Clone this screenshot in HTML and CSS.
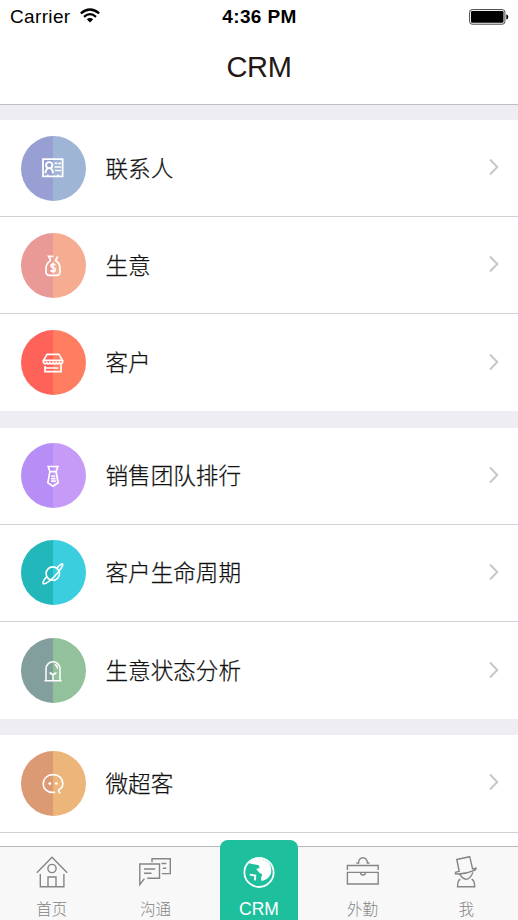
FILE: index.html
```html
<!DOCTYPE html>
<html lang="zh-CN">
<head>
<meta charset="utf-8">
<title>CRM</title>
<link rel="stylesheet" href="styles.css">
</head>
<body>
<div class="app">
  <header class="header">
    <div class="status">
      <div class="carrier"><span>Carrier</span>
        <svg class="wifi" width="20" height="15" viewBox="0 0 20 15" fill="none" stroke="#000" stroke-width="2.2"><path d="M.8 5.3Q10-2.3 19.2 5.3M4 8.8Q10 3.6 16 8.8"/><path d="M6.8 11.2Q10 8.6 13.2 11.2L10 14.4z" fill="#000" stroke="none"/></svg>
      </div>
      <div class="clock">4:36 PM</div>
      <svg class="battery" width="40" height="16" viewBox="0 0 40 16"><rect x=".6" y=".6" width="35.3" height="14.6" rx="2.6" fill="#fff" stroke="#444" stroke-width="1"/><rect x="2" y="2" width="32.5" height="11.8" rx="1.2"/><path d="M37.3 5.2q2 .7 2 2.7t-2 2.7z"/></svg>
    </div>
    <h1 class="title">CRM</h1>
  </header>

  <main class="list">
    <section class="group">
      <div class="row"><span class="badge contacts"><svg class="glyph" viewBox="0 0 24 24"><path d="M2 3.2h19.6v17.2H2z" stroke-width="1.8"/><circle cx="8.2" cy="9.2" r="3.1" stroke-width="1.9"/><path d="M4.4 17.4q.2-3.7 2.3-5M9.7 12.4q2.1 1.3 2.3 5" stroke-width="1.9"/><path d="M13.5 7.4h2.7M17.2 7.4h2.7M13.5 11h6.4M14 14.5h5.9M6.8 18.6v2M17.2 18.6v2"/></svg></span><span class="label">联系人</span><svg class="chevron" viewBox="0 0 10 18"><path d="M1 1.5 8.3 9 1 16.5"/></svg></div>
      <div class="row"><span class="badge deals"><svg class="glyph" viewBox="0 0 24 24"><path d="M9.8 7.4 7.6 3.3h4.7M16.6 3.5l-2.1 4.1C17.7 9.4 19 12.4 19 15.5V19q0 3.3-3.4 3.3H8.4Q5 22.3 5 19v-3.5C5 12 6.4 9.3 9.8 7.4" stroke-width="1.7"/><path d="M14.3 12.3q-.7-1.2-2.3-1.2-2.1 0-2.1 1.7 0 1.4 2.1 1.8 2.4.5 2.4 2.1 0 1.8-2.4 1.8-1.9 0-2.5-1.4M12 9.4v10.7" stroke-width="1.5"/></svg></span><span class="label">生意</span><svg class="chevron" viewBox="0 0 10 18"><path d="M1 1.5 8.3 9 1 16.5"/></svg></div>
      <div class="row"><span class="badge clients"><svg class="glyph" viewBox="0 0 24 24"><path d="M6.1 3.3h11.8l3.6 6H2.5zM2.5 9.3v2.2q1.6 2.5 3.2.2 1.6 2.3 3.2 0 1.6 2.3 3.2 0 1.6 2.3 3.2 0 1.6 2.3 3.2 0 1.6 2.3 3-.2V9.3M2.5 9.3h19M4 15v5.7h16v-7.2M4 17h13.5" stroke-width="1.7"/></svg></span><span class="label">客户</span><svg class="chevron" viewBox="0 0 10 18"><path d="M1 1.5 8.3 9 1 16.5"/></svg></div>
    </section>
    <section class="group">
      <div class="row"><span class="badge ranking"><svg class="glyph" viewBox="0 0 24 24"><path d="M7.2 2.5h9.6l-1.7 5.2H8.9zM8.9 7.7 6.9 18.8 12 22.2l5.1-3.4-2-11.1M10 12h4.2M10 14.6h4.4M10 17.2h4.8" stroke-width="1.7"/></svg></span><span class="label">销售团队排行</span><svg class="chevron" viewBox="0 0 10 18"><path d="M1 1.5 8.3 9 1 16.5"/></svg></div>
      <div class="row"><span class="badge cycle"><svg class="glyph" viewBox="0 0 24 24"><circle cx="11.8" cy="12.6" r="6.7"/><path d="M15.8 7.1C18.5 4 21.2 2.3 21.7 2.9 22.6 4 18.8 10 13.2 15.8 7.8 21.3 3.2 23.7 2.2 22.4 1.6 21.4 3.1 18.5 6 15.4"/></svg></span><span class="label">客户生命周期</span><svg class="chevron" viewBox="0 0 10 18"><path d="M1 1.5 8.3 9 1 16.5"/></svg></div>
      <div class="row"><span class="badge analysis"><svg class="glyph" viewBox="0 0 24 24"><path d="M5 21V9.8a7 7 0 0 1 14 0V21M3.4 21.8h17.2M12 21v-5.2M13.8 5.5q2.5.9 2.7 4.2" stroke-width="1.5"/><path d="M12 16q-3.3.2-4-2.6 3.2-.6 4 1.5.8-2.1 4-1.5-.7 2.8-4 2.6z" fill="#fff" stroke="none"/></svg></span><span class="label">生意状态分析</span><svg class="chevron" viewBox="0 0 10 18"><path d="M1 1.5 8.3 9 1 16.5"/></svg></div>
    </section>
    <section class="group">
      <div class="row"><span class="badge social"><svg class="glyph" viewBox="0 0 24 24"><path d="M14.2 21.4H11.5C6 21.4 2.2 17.7 2.2 12.7S6.3 3.6 12 3.6s9.8 3.9 9.8 9.1c0 2.7-1.8 4.9-4.2 6.3q-.2 2.2 1.8 3.4" stroke-width="1.6"/><circle cx="8.8" cy="12.6" r="1.4" fill="#fff" stroke="none"/><circle cx="15.3" cy="12.6" r="1.4" fill="#fff" stroke="none"/></svg></span><span class="label">微超客</span><svg class="chevron" viewBox="0 0 10 18"><path d="M1 1.5 8.3 9 1 16.5"/></svg></div>
      <div class="row"></div>
    </section>
  </main>

  <nav class="tabs">
    <a class="tab"><svg class="tab-icon" viewBox="0 0 36 36"><path d="M2.8 18.7 18 3.3l15.2 15.4M6.3 20v12.8h23.6V20M14 32v-9h8v9"/><circle cx="18" cy="14.5" r="4.1"/></svg><span>首页</span></a>
    <a class="tab"><svg class="tab-icon" viewBox="0 0 36 36"><path d="M15 8.2V4.8h18.3v14.8h-8.5M10.2 24.3h12.3V10H2.8v20.6l4.6-6M7 15h11.2M7 19.3h7.5M24.5 9.5h4.8M25.8 14.2h3.5"/></svg><span>沟通</span></a>
    <a class="tab active"><svg class="tab-icon" viewBox="0 0 36 36"><circle cx="18" cy="18.4" r="14.6" stroke-width="1.8"/><path d="M7.8 9.2C12.5 3.8 20 3 25.4 7c4 2.7 5.5 7 4.7 11.5-.8 4.1-4.3 7.4-9.5 8.6-1-2.6-.1-4.6.8-6.6l-3.3-2.1-2.9-3.3 3.4-1.1-.8-2.8z" fill="#fff" stroke="none"/><path d="m8.8 20.6 5.5.9-.4 4.9" stroke-width="1.9"/></svg><span>CRM</span></a>
    <a class="tab"><svg class="tab-icon" viewBox="0 0 36 36"><path d="M2.4 16v-4.5h30.8V16M2.4 18.4h30.8V30H2.4zM11.4 9h2.2c0-7 8.8-7 8.8 0h2.2M15.5 18.8c.3 3 4.7 3 5 0"/></svg><span>外勤</span></a>
    <a class="tab"><svg class="tab-icon" viewBox="0 0 36 36"><path d="m8.8 5.5 12.9-2.8L24.6 15l3.5-.8c.4 1.3-.5 1.6-1.7 2.2C20.4 19 14.5 20.4 7.4 19.8l.2-1.5 3.6-1zM11.9 20.4q2.3 4.3 6.6 5 4.6-1.4 6.3-7M12.4 25.2q-2.7.7-2.9 7.6h17.2q-.1-6.8-3.1-7.6"/></svg><span>我</span></a>
  </nav>
</div>
</body>
</html>
```
FILE: styles.css
```css
* { box-sizing: border-box; }

body {
  margin: 0;
  background: #fff;
  font-family: "Liberation Sans", "Noto Sans CJK SC", sans-serif;
}

.app {
  display: flex;
  flex-direction: column;
  height: 920px;
  overflow: hidden;
}

.header {
  flex: none;
  height: 104.5px;
  border-bottom: 1px solid #c0c0c2;
}

.status {
  display: grid;
  grid-template-columns: 1fr auto 1fr;
  align-items: center;
  height: 33px;
  padding: 0 9px 0 10px;
  font-size: 19px;
  line-height: 33px;
}

.carrier { display: flex; align-items: center; gap: 9px; letter-spacing: 0.35px; }
.wifi { margin-top: -2px; }
.clock { font-weight: bold; letter-spacing: 0.4px; }
.battery { justify-self: end; }

.title {
  margin: 0;
  color: #231815;
  font-size: 29px;
  font-weight: normal;
  line-height: 69px;
  letter-spacing: -0.4px;
  text-align: center;
}

.list {
  display: flex;
  flex: 1;
  flex-direction: column;
  gap: 16.3px;
  min-height: 0;
  padding-top: 15.5px;
  overflow: hidden;
  background: #eeedf3;
}

.group { flex: none; background: #fff; }

.row {
  display: flex;
  align-items: center;
  height: 97.2px;
  padding: 0 19px 0 21px;
  border-bottom: 1px solid #d2d2d4;
}

.row:last-child { height: 97px; border-bottom: 0; }

.badge {
  display: flex;
  flex: none;
  align-items: center;
  justify-content: center;
  width: 65px;
  height: 65px;
  border-radius: 50%;
  background: linear-gradient(90deg, var(--left) 50%, var(--right) 50%);
}

.contacts { --left: #979fd3; --right: #9eb5d6; }
.deals { --left: #ea9a96; --right: #f5ac91; }
.clients { --left: #ff6259; --right: #ff7d61; }
.ranking { --left: #b78df6; --right: #c69bf8; }
.cycle { --left: #22b8bb; --right: #3bcede; }
.analysis { --left: #829e9d; --right: #92c19b; }
.social { --left: #db9a73; --right: #ecb57a; }

.glyph {
  width: 24px;
  height: 24px;
  margin-right: 1px;
  fill: none;
  stroke: #fff;
  stroke-width: 1.6;
}

.label {
  flex: 1;
  margin-left: 19.5px;
  padding-top: 3px;
  color: #111;
  font-size: 22.6px;
  font-weight: 300;
  line-height: 32px;
  -webkit-text-stroke: 0.25px #111;
}

.chevron {
  width: 10px;
  height: 18px;
  margin-top: -2px;
  fill: none;
  stroke: #c7c7cc;
  stroke-width: 2;
}

.tabs {
  display: flex;
  flex: none;
  justify-content: space-around;
  height: 74px;
  border-top: 1px solid #b9b9b9;
  background: #f8f8f8;
}

.tab {
  display: flex;
  flex-direction: column;
  align-items: center;
  width: 78px;
  padding-top: 7px;
  color: #858585;
  font-size: 15.5px;
  font-weight: 300;
  line-height: 22px;
}

.tab span { padding-top: 1px; }

.tab-icon {
  flex: none;
  width: 36px;
  height: 36px;
  margin-bottom: 8px;
  fill: none;
  stroke: currentColor;
  stroke-width: 1.4;
}

.active {
  height: 80px;
  margin-top: -7px;
  padding-top: 14px;
  border-radius: 8px 8px 0 0;
  background: #1dbf9d;
  color: #fff;
  font-size: 17.5px;
}

.active span { padding-top: 0; }
```
